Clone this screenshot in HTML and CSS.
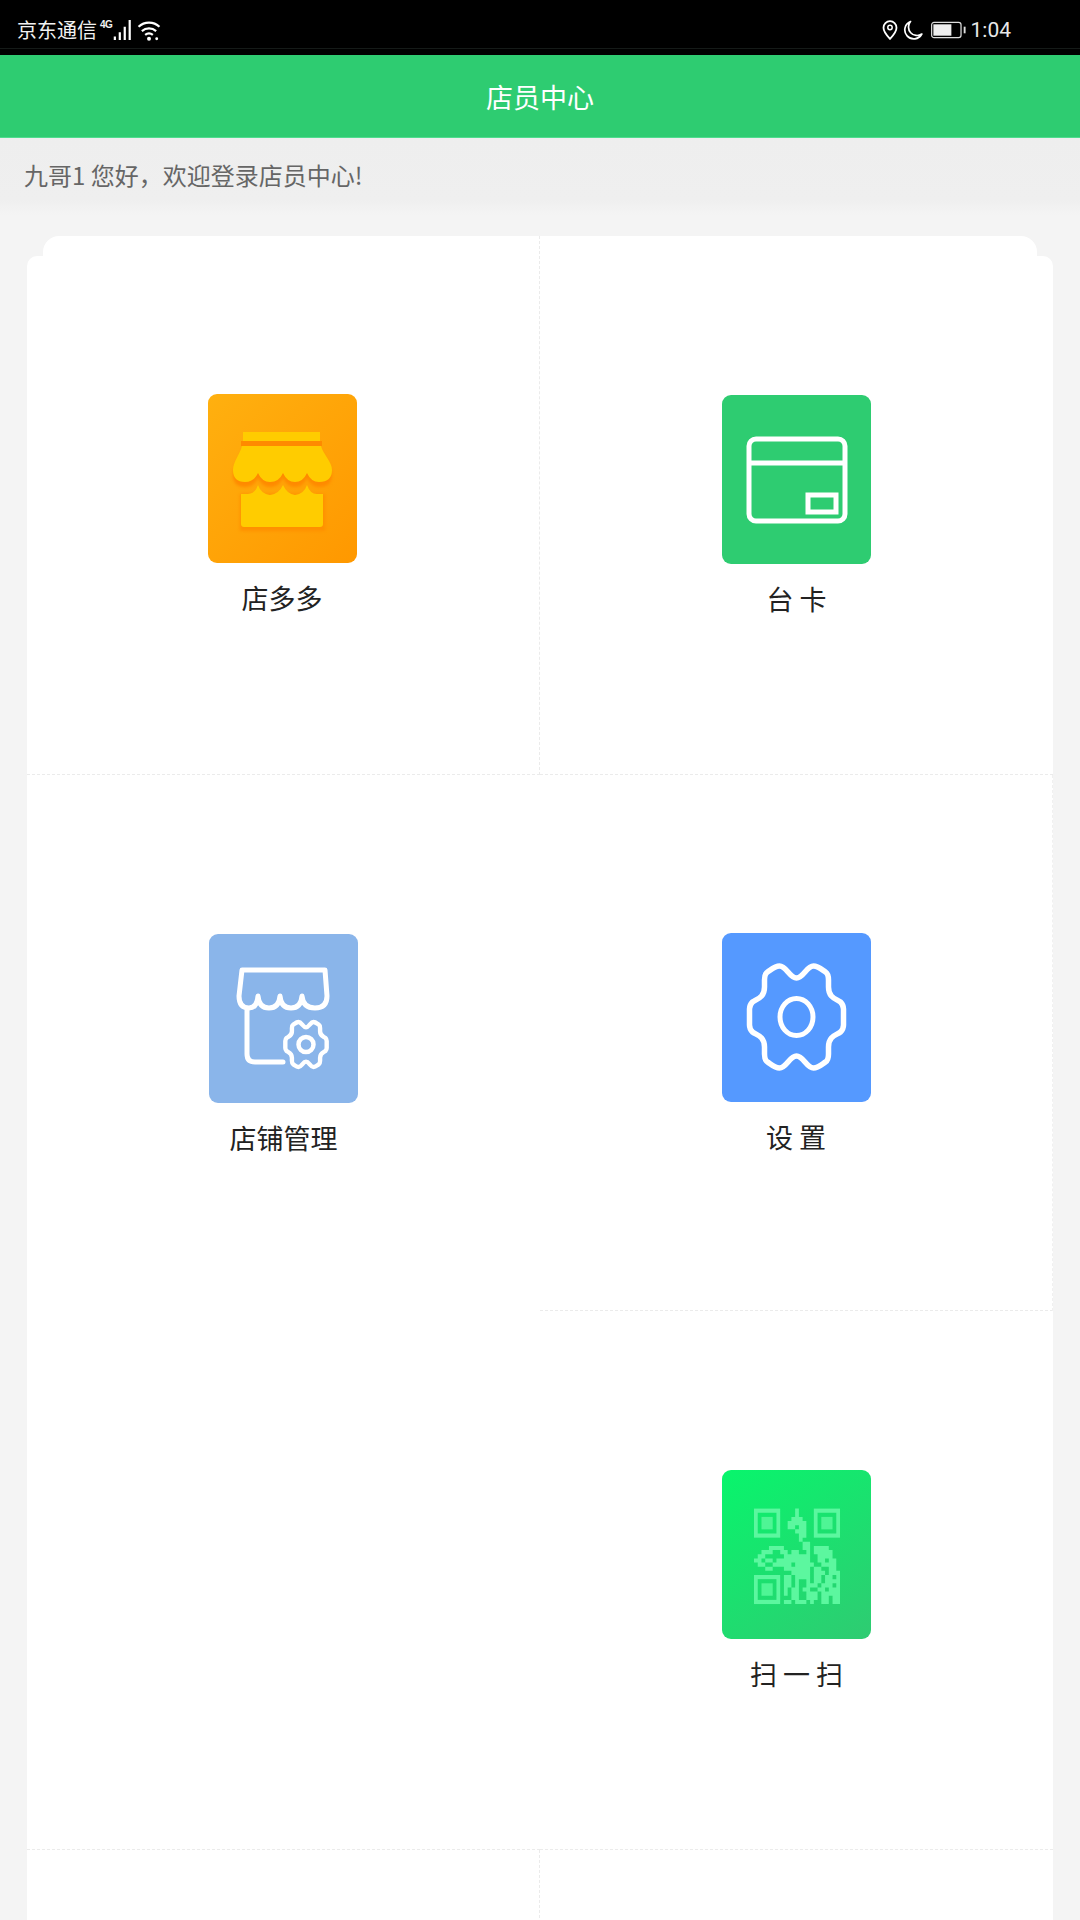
FILE: index.html
```html
<!DOCTYPE html>
<html lang="zh-CN">
<head>
<meta charset="utf-8">
<title>店员中心</title>
<link rel="stylesheet" href="styles.css">
</head>
<body>
<div class="statusbar">
  <div class="status-group">
    <span class="carrier">京东通信</span>
    <span class="net">4G</span>
    <svg class="sicon signal" viewBox="0 0 17 20"><path d="M1 16h2v3H1zM5.500 12h2v7h-2zM10 7h2v12h-2zM14.500 1h2v18h-2z"/></svg>
    <svg class="sicon wifi" viewBox="0 0 21 20"><g fill="none" stroke="#fff" stroke-width="2"><path d="M1 7a14 14 0 0 1 19 0"/><path d="M4 11a10 10 0 0 1 13 0"/><path d="M7 14.500a5.500 5.500 0 0 1 7 0"/></g><circle cx="10.500" cy="18" r="1.800" fill="#fff"/><circle cx="17.500" cy="18" r="1.300" fill="#fff"/></svg>
  </div>
  <div class="status-group">
    <svg class="sicon pin" viewBox="0 0 16 20"><path d="M8 1.200a6.500 6.500 0 0 0-6.500 6.500C1.500 12 8 18.800 8 18.800S14.500 12 14.500 7.700A6.500 6.500 0 0 0 8 1.200z" fill="none" stroke="#fff" stroke-width="1.800"/><circle cx="8" cy="7.500" r="2.200" fill="none" stroke="#fff" stroke-width="1.500"/></svg>
    <svg class="sicon moon" viewBox="0 0 20 20"><path d="M7.500 1.500A9 9 0 1 0 18.800 14 8.500 8.500 0 0 1 7.500 1.500z" fill="none" stroke="#fff" stroke-width="1.700" stroke-linejoin="round"/></svg>
    <svg class="sicon battery" viewBox="0 0 38 18"><rect x=".7" y="1" width="31" height="16" rx="2.500" fill="none" stroke="#ddd" stroke-width="1.300"/><rect x="2.500" y="3" width="19" height="12" fill="#eee"/><rect x="34.500" y="5.500" width="2" height="7" fill="#ddd"/></svg>
    <span class="time">1:04</span>
  </div>
</div>

<header class="topbar">店员中心</header>
<div class="greeting">九哥1 您好，欢迎登录店员中心!</div>

<main class="board">
  <div class="grid">
    <a class="cell cell-high cell-nudge line-right line-bottom">
      <span class="tile tile-orange">
        <svg viewBox="0 0 149 169">
          <rect x="35" y="38" width="77" height="9" fill="#ffcc00"/>
          <rect x="33" y="47" width="81" height="5" fill="#ff8a00"/>
          <path class="soft" d="M34 52H113C115 60 124 68 124 76Q124 88 111 88Q103 88 99 79Q95 88 87 88Q79 88 75 79Q71 88 62 88Q54 88 50 79Q46 88 37 88Q25 88 25 76C25 68 32 60 34 52Z" transform="translate(0 5)" fill="#ff8a00"/>
          <path class="soft" d="M32 100H117V137H32Z" fill="#ff9000"/>
          <path d="M33 100H40Q47 100 50 91Q53 100 62 101Q71 100 75 91Q79 100 87 101Q96 100 99 91Q102 100 109 100H115V130a3 3 0 0 1-3 3H36a3 3 0 0 1-3-3Z" fill="#ffcc00"/>
          <path d="M34 52H113C115 60 124 68 124 76Q124 88 111 88Q103 88 99 79Q95 88 87 88Q79 88 75 79Q71 88 62 88Q54 88 50 79Q46 88 37 88Q25 88 25 76C25 68 32 60 34 52Z" fill="#ffcc00"/>
        </svg>
      </span>
      <span class="label">店多多</span>
    </a>
    <a class="cell line-bottom">
      <span class="tile tile-green">
        <svg viewBox="0 0 149 169" fill="none" stroke="#fff" stroke-width="5">
          <rect x="27" y="44" width="96" height="82" rx="7"/>
          <path d="M27 68H123"/>
          <rect x="86" y="100" width="28" height="17"/>
        </svg>
      </span>
      <span class="label">台 卡</span>
    </a>
    <a class="cell">
      <span class="tile tile-sky">
        <svg viewBox="0 0 149 169" fill="none" stroke="#fff" stroke-width="5" stroke-linecap="round" stroke-linejoin="round">
          <path d="M33 36H116L118 62Q118 74 106 74Q94 74 93 62Q92 74 82 74Q72 74 71 62Q70 74 60 74Q50 74 49 62Q48 74 40 74Q30 74 30 62Z"/>
          <path d="M38 76V120Q38 128 46 128H74"/>
          <path transform="translate(97 110.500) scale(.44)" stroke-width="10" d="M0-39C-7-39-10-51-17-51C-22-51-27-46-29-45C-32-43-32-40-32-37L-32-30C-32-19-40-18-44-15C-46-13-47-11-47-8L-47 8C-47 11-46 13-44 15C-40 18-32 19-32 30L-32 37C-32 40-32 43-29 45C-27 46-22 51-17 51C-10 51-7 39 0 39C7 39 10 51 17 51C22 51 27 46 29 45C32 43 32 40 32 37L32 30C32 19 40 18 44 15C46 13 47 11 47 8L47-8C47-11 46-13 44-15C40-18 32-19 32-30L32-37C32-40 32-43 29-45C27-46 22-51 17-51C10-51 7-39 0-39Z"/>
          <circle cx="97" cy="110.500" r="7.500" stroke-width="4.500"/>
        </svg>
      </span>
      <span class="label">店铺管理</span>
    </a>
    <a class="cell cell-high line-bottom line-edge">
      <span class="tile tile-blue">
        <svg viewBox="0 0 149 169" fill="none" stroke="#fff" stroke-width="5.500" stroke-linejoin="round">
          <path transform="translate(74.500 84)" d="M0-39C-7-39-10-51-17-51C-22-51-27-46-29-45C-32-43-32-40-32-37L-32-30C-32-19-40-18-44-15C-46-13-47-11-47-8L-47 8C-47 11-46 13-44 15C-40 18-32 19-32 30L-32 37C-32 40-32 43-29 45C-27 46-22 51-17 51C-10 51-7 39 0 39C7 39 10 51 17 51C22 51 27 46 29 45C32 43 32 40 32 37L32 30C32 19 40 18 44 15C46 13 47 11 47 8L47-8C47-11 46-13 44-15C40-18 32-19 32-30L32-37C32-40 32-43 29-45C27-46 22-51 17-51C10-51 7-39 0-39Z"/>
          <ellipse cx="74.500" cy="84" rx="16.500" ry="18.500" stroke-width="5"/>
        </svg>
      </span>
      <span class="label">设 置</span>
    </a>
    <div class="cell line-bottom"></div>
    <a class="cell line-bottom">
      <span class="tile tile-scan">
        <svg viewBox="0 0 149 169">
          <g transform="translate(32 38.600) scale(3.74 4.150)" fill="none" stroke="#5cf79f" stroke-width="1">
            <rect x=".5" y=".5" width="6" height="6"/>
            <rect x="16.500" y=".5" width="6" height="6"/>
            <rect x=".5" y="16.500" width="6" height="6"/>
            <path d="M11 .5h1M11 1.500h1M10 2.500h3M9 3.500h5M9 4.500h2M12 4.500h2M11 5.500h3M12 6.500h2M12 7.500h1M13 8.500h2M13 9.500h2M4 9.500h4M16 9.500h4M2 10.500h3M7 10.500h2M10 10.500h2M14 10.500h1M16 10.500h5M1 11.500h2M8 11.500h7M17 11.500h4M0 12.500h2M3 12.500h2M6 12.500h9M17 12.500h2M20 12.500h2M1 13.500h2M5 13.500h5M11 13.500h5M18 13.500h4M3 14.500h2M8 14.500h7M16 14.500h2M20 14.500h2M10 15.500h5M16 15.500h3M20 15.500h3M8 16.500h2M11 16.500h4M16 16.500h2M19 16.500h2M22 16.500h1M8 17.500h2M11 17.500h1M14 17.500h1M16 17.500h2M19 17.500h4M8 18.500h2M11 18.500h1M14 18.500h3M18 18.500h3M22 18.500h1M8 19.500h1M10 19.500h2M13 19.500h2M17 19.500h2M20 19.500h3M8 20.500h1M10 20.500h2M14 20.500h3M18 20.500h5M10 21.500h2M14 21.500h3M18 21.500h2M21 21.500h2M8 22.500h2M11 22.500h3M15 22.500h1M18 22.500h2M21 22.500h2"/>
          </g>
          <g transform="translate(32 38.600) scale(3.74 4.150)" fill="#4ff595">
            <rect x="2" y="2" width="3" height="3"/>
            <rect x="18" y="2" width="3" height="3"/>
            <rect x="2" y="18" width="3" height="3"/>
          </g>
        </svg>
      </span>
      <span class="label">扫 一 扫</span>
    </a>
    <div class="cell line-right"></div>
    <div class="cell"></div>
  </div>
</main>
</body>
</html>
```

FILE: styles.css
```css
* {
  box-sizing: border-box;
}

html,
body {
  margin: 0;
  height: 1920px;
  overflow: hidden;
}

body {
  background: #f4f4f4;
  font-family: "Noto Sans CJK SC", "Noto Sans", sans-serif;
  color: #222;
}

.statusbar {
  height: 55px;
  padding: 4px 69px 0 17px;
  display: flex;
  align-items: center;
  justify-content: space-between;
  color: #f2f2f2;
  background: linear-gradient(#000 48px, #151a18 48px, #151a18 49px, #000 49px);
}

.status-group {
  display: flex;
  align-items: center;
}

.carrier {
  font-size: 20px;
  line-height: 26px;
}

.net {
  width: 12px;
  margin: -10px 0 0 3px;
  font: 700 10px/10px "Liberation Sans", sans-serif;
  letter-spacing: -.5px;
}

.sicon {
  display: block;
  fill: #fff;
}

.signal {
  width: 20px;
  height: 22px;
}

.wifi {
  width: 24px;
  height: 22px;
  margin-left: 5px;
}

.pin {
  width: 16px;
  height: 20px;
}

.moon {
  width: 20px;
  height: 20px;
  margin-left: 5px;
}

.battery {
  width: 36px;
  height: 18px;
  margin-left: 8px;
}

.time {
  margin-left: 4px;
  font: 400 21px/26px Roboto, sans-serif;
  color: #e8e8e8;
}

.topbar {
  height: 83px;
  display: flex;
  align-items: center;
  justify-content: center;
  background: #2ecc71;
  border-bottom: 1px solid #4fdc8e;
  color: #fff;
  font-size: 27px;
  line-height: 1;
}

.greeting {
  height: 77px;
  padding: 17px 24px 0;
  background: linear-gradient(#eeeeee 0, #efefef 62px, #f4f4f4 77px);
  color: #666;
  font-size: 24px;
  line-height: 40px;
}

.board {
  position: relative;
  margin: 21px 27px 0;
  height: 1700px;
}

.board::before {
  content: "";
  position: absolute;
  inset: 20px 0 0;
  background: #fff;
  border-radius: 10px 10px 0 0;
}

.board::after {
  content: "";
  position: absolute;
  top: 0;
  left: 16px;
  right: 16px;
  height: 40px;
  background: #fff;
  border-radius: 16px 16px 0 0;
}

.grid {
  position: relative;
  z-index: 1;
  display: grid;
  grid-template-columns: 513px 513px;
  grid-template-rows: 539px 536px 539px 538px;
}

.cell {
  display: flex;
  flex-direction: column;
  align-items: center;
  padding-top: 159px;
}

.cell-high {
  padding-top: 158px;
}

.cell-nudge {
  padding-right: 2px;
}

.line-right {
  border-right: 1px dashed #ebebeb;
}

.line-bottom {
  border-bottom: 1px dashed #ebebeb;
}

.line-edge {
  border-right: 1px dashed #f0f0f0;
}

.tile {
  display: block;
  width: 149px;
  height: 169px;
  border-radius: 9px;
  overflow: hidden;
}

.tile svg {
  display: block;
  width: 100%;
  height: 100%;
}

.soft {
  filter: blur(1.500px);
}

.tile-orange {
  background: linear-gradient(135deg, #ffb00f, #ff9800);
}

.tile-green {
  background: #2ecc71;
}

.tile-sky {
  background: #8ab5ea;
}

.tile-blue {
  background: #5599ff;
}

.tile-scan {
  background: linear-gradient(145deg, #08f56c, #2fcb72);
}

.label {
  margin-top: 15px;
  font-size: 27px;
  line-height: 40px;
  color: #222;
}
```
